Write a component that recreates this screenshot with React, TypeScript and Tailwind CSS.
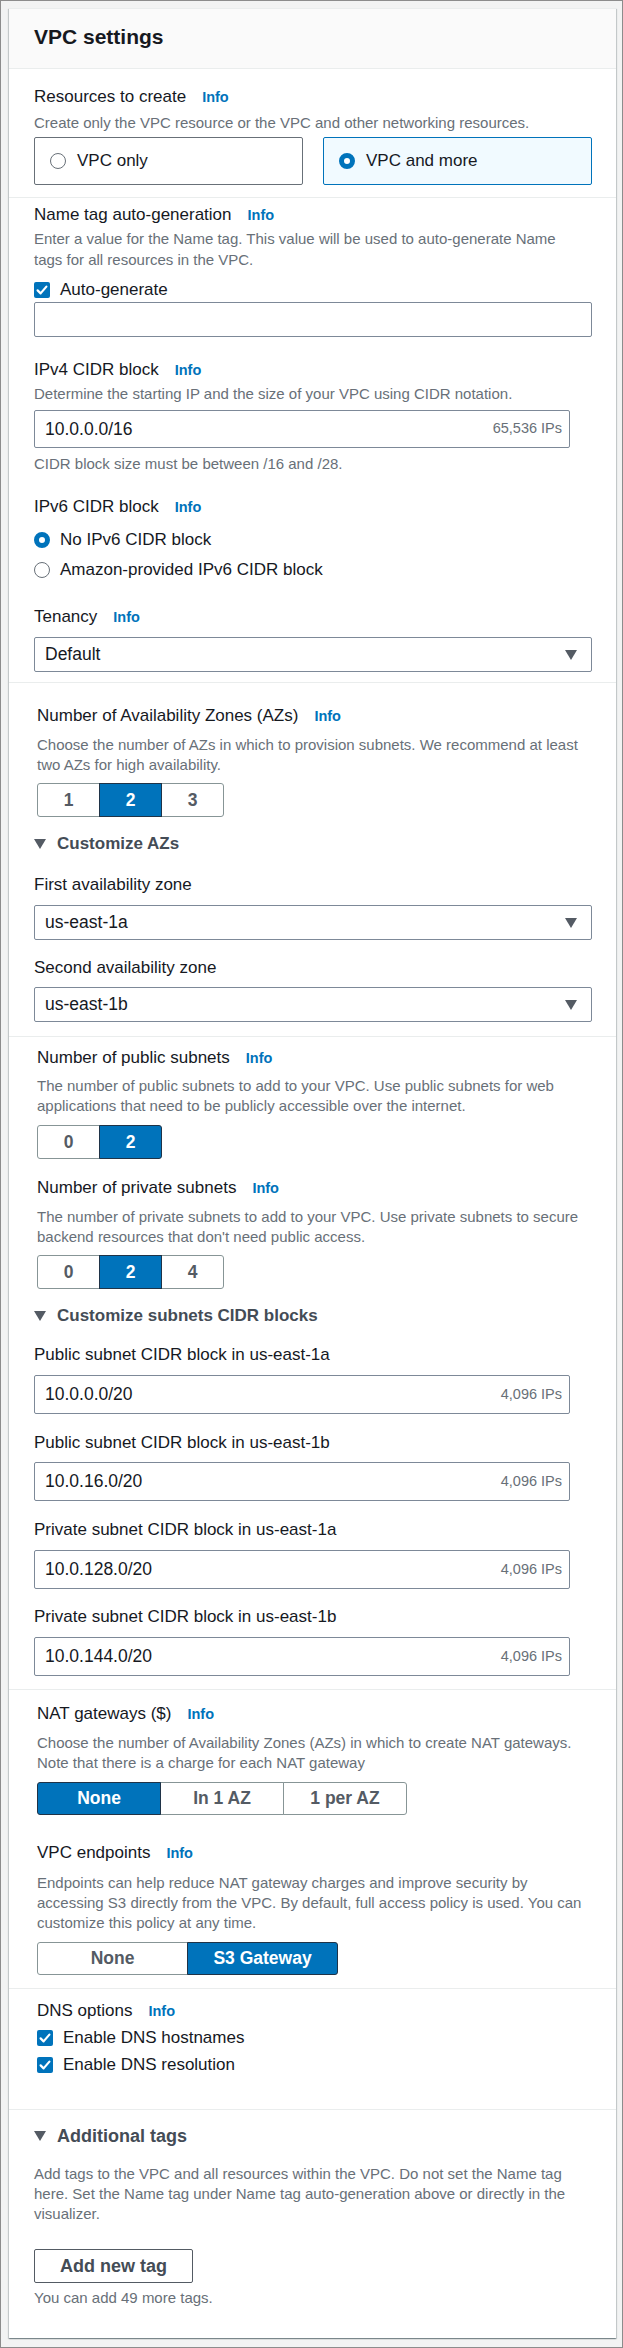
import React from "react";

const FONT = "font-['Liberation_Sans',Arial,sans-serif]";

function Info() {
  return <span className="ml-[16px] text-[14.5px] font-bold text-[#0073bb]">Info</span>;
}

function Label({ children, info, className = "" }: { children: React.ReactNode; info?: boolean; className?: string }) {
  return (
    <div className={`h-[22px] whitespace-nowrap text-[17px] leading-[22px] text-[#16191f] ${className}`}>
      {children}
      {info && <Info />}
    </div>
  );
}

function Desc({ lines, className = "" }: { lines: string[]; className?: string }) {
  return (
    <div className={`text-[15px] leading-[20px] text-[#687078] ${className}`}>
      {lines.map((l) => (
        <div key={l} className="whitespace-nowrap">
          {l}
        </div>
      ))}
    </div>
  );
}

function Caret({ className = "" }: { className?: string }) {
  return (
    <svg width="12" height="10" viewBox="0 0 12 10" className={className}>
      <path d="M0 0 H12 L6 10 Z" fill="#545b64" />
    </svg>
  );
}

function Expander({ children, className = "" }: { children: React.ReactNode; className?: string }) {
  return (
    <div className={`flex h-[22px] items-center gap-[11px] ${className}`}>
      <Caret />
      <span className="text-[17px] font-bold text-[#444c56]">{children}</span>
    </div>
  );
}

function Radio({ on }: { on?: boolean }) {
  return on ? (
    <span className="block h-[16px] w-[16px] shrink-0 rounded-full border-[5px] border-[#0073bb] bg-white" />
  ) : (
    <span className="block h-[16px] w-[16px] shrink-0 rounded-full border-[1.5px] border-[#687078] bg-white" />
  );
}

function Checkbox() {
  return (
    <svg width="16" height="16" viewBox="0 0 16 16" className="shrink-0">
      <rect width="16" height="16" rx="2" fill="#0073bb" />
      <path d="M3.6 8.4 L6.6 11.4 L12.4 4.6" stroke="#fff" strokeWidth="2.2" fill="none" strokeLinecap="round" strokeLinejoin="round" />
    </svg>
  );
}

function CheckRow({ children, className = "" }: { children: React.ReactNode; className?: string }) {
  return (
    <div className={`flex h-[22px] items-center gap-[10px] text-[17px] text-[#16191f] ${className}`}>
      <Checkbox />
      <span>{children}</span>
    </div>
  );
}

function RadioRow({ children, on, className = "" }: { children: React.ReactNode; on?: boolean; className?: string }) {
  return (
    <div className={`flex h-[22px] items-center gap-[10px] text-[17px] text-[#16191f] ${className}`}>
      <Radio on={on} />
      <span>{children}</span>
    </div>
  );
}

function Select({ value, className = "" }: { value: string; className?: string }) {
  return (
    <div className={`flex h-[35px] w-full items-center justify-between rounded-[2px] border border-[#7d8998] bg-white pl-[10px] pr-[14px] text-[17.5px] text-[#16191f] ${className}`}>
      <span>{value}</span>
      <Caret />
    </div>
  );
}

function CidrInput({ value, ips, className = "" }: { value: string; ips: string; className?: string }) {
  return (
    <div className={`flex w-[536px] items-center justify-between rounded-[2px] border border-[#7d8998] bg-white pl-[10px] pr-[7px] ${className}`}>
      <span className="text-[17.5px] text-[#16191f]">{value}</span>
      <span className="text-[14.5px] text-[#687078]">{ips}</span>
    </div>
  );
}

function Segmented({ options, selected, btn, className = "" }: { options: string[]; selected: string; btn: string; className?: string }) {
  return (
    <div className={`flex ${className}`}>
      {options.map((o, i) => {
        const on = o === selected;
        return (
          <div
            key={o}
            className={`flex items-center justify-center border text-[17.5px] font-bold ${btn} ${i > 0 ? "-ml-px" : ""} ${
              i === 0 ? "rounded-l-[3px]" : ""
            } ${i === options.length - 1 ? "rounded-r-[3px]" : ""} ${
              on ? "relative z-10 border-[#1f3347] bg-[#0073bb] text-white" : "border-[#879596] bg-white text-[#545b64]"
            }`}
          >
            {o}
          </div>
        );
      })}
    </div>
  );
}

export default function App() {
  return (
    <div className={`h-[2348px] w-[623px] border border-[#8c8c8c] bg-[#f2f3f3] pl-[8px] pr-[6px] pt-[7px] ${FONT}`}>
      <div className="border-t border-[#eaeded] bg-white shadow-[0_1px_1px_0_rgba(0,28,36,0.3),1px_1px_1px_0_rgba(0,28,36,0.15),-1px_1px_1px_0_rgba(0,28,36,0.15)]">
        {/* Header */}
        <div className="h-[60px] border-b border-[#eaeded] bg-[#fafafa] pl-[25px] pt-[15px]">
          <h2 className="text-[21px] font-bold leading-[26px] text-[#16191f]">VPC settings</h2>
        </div>

        {/* Resources to create */}
        <div className="pl-[25px] pr-[24px] pb-[12px] pt-[17px]">
          <Label info>Resources to create</Label>
          <Desc className="mt-[5px]" lines={["Create only the VPC resource or the VPC and other networking resources."]} />
          <div className="mt-[4px] grid grid-cols-2 gap-[20px]">
            <div className="flex h-[48px] items-center gap-[11px] rounded-[2px] border border-[#687078] pl-[15px] text-[17px] text-[#16191f]">
              <Radio />
              <span>VPC only</span>
            </div>
            <div className="flex h-[48px] items-center gap-[11px] rounded-[2px] border border-[#0073bb] bg-[#f1faff] pl-[15px] text-[17px] text-[#16191f]">
              <Radio on />
              <span>VPC and more</span>
            </div>
          </div>
        </div>

        {/* Name tag, CIDR, tenancy */}
        <div className="border-t border-[#eaeded] pl-[25px] pr-[24px] pb-[10px] pt-[6px]">
          <Label info>Name tag auto-generation</Label>
          <div className="mt-[2px] text-[15px] leading-[21px] text-[#687078]">
            <div className="whitespace-nowrap">Enter a value for the Name tag. This value will be used to auto-generate Name</div>
            <div className="whitespace-nowrap">tags for all resources in the VPC.</div>
          </div>
          <CheckRow className="mt-[9px]">Auto-generate</CheckRow>
          <div className="mt-[1px] h-[35px] w-full rounded-[2px] border border-[#7d8998] bg-white" />

          <Label info className="mt-[22px]">IPv4 CIDR block</Label>
          <Desc className="mt-[3px]" lines={["Determine the starting IP and the size of your VPC using CIDR notation."]} />
          <CidrInput className="mt-[6px] h-[38px]" value="10.0.0.0/16" ips="65,536 IPs" />
          <Desc className="mt-[6px]" lines={["CIDR block size must be between /16 and /28."]} />

          <Label info className="mt-[22px]">IPv6 CIDR block</Label>
          <RadioRow on className="mt-[11px]">No IPv6 CIDR block</RadioRow>
          <RadioRow className="mt-[8px]">Amazon-provided IPv6 CIDR block</RadioRow>

          <Label info className="mt-[25px]">Tenancy</Label>
          <Select className="mt-[9px]" value="Default" />
        </div>

        {/* Availability zones */}
        <div className="border-t border-[#eaeded] pl-[25px] pr-[24px] pb-[14px] pt-[22px]">
          <Label info className="ml-[3px]">Number of Availability Zones (AZs)</Label>
          <Desc
            className="ml-[3px] mt-[8px]"
            lines={["Choose the number of AZs in which to provision subnets. We recommend at least", "two AZs for high availability."]}
          />
          <Segmented className="ml-[3px] mt-[8px]" btn="h-[34px] w-[63px]" options={["1", "2", "3"]} selected="2" />
          <Expander className="mt-[16px]">Customize AZs</Expander>
          <Label className="mt-[19px]">First availability zone</Label>
          <Select className="mt-[9px]" value="us-east-1a" />
          <Label className="mt-[17px]">Second availability zone</Label>
          <Select className="mt-[8px]" value="us-east-1b" />
        </div>

        {/* Subnets */}
        <div className="border-t border-[#eaeded] pl-[25px] pr-[24px] pb-[13px] pt-[10px]">
          <Label info className="ml-[3px]">Number of public subnets</Label>
          <Desc
            className="ml-[3px] mt-[7px]"
            lines={["The number of public subnets to add to your VPC. Use public subnets for web", "applications that need to be publicly accessible over the internet."]}
          />
          <Segmented className="ml-[3px] mt-[9px]" btn="h-[34px] w-[63px]" options={["0", "2"]} selected="2" />

          <Label info className="ml-[3px] mt-[18px]">Number of private subnets</Label>
          <Desc
            className="ml-[3px] mt-[8px]"
            lines={["The number of private subnets to add to your VPC. Use private subnets to secure", "backend resources that don't need public access."]}
          />
          <Segmented className="ml-[3px] mt-[8px]" btn="h-[34px] w-[63px]" options={["0", "2", "4"]} selected="2" />

          <Expander className="mt-[16px]">Customize subnets CIDR blocks</Expander>
          <Label className="mt-[17px]">Public subnet CIDR block in us-east-1a</Label>
          <CidrInput className="mt-[9px] h-[39px]" value="10.0.0.0/20" ips="4,096 IPs" />
          <Label className="mt-[18px]">Public subnet CIDR block in us-east-1b</Label>
          <CidrInput className="mt-[8px] h-[39px]" value="10.0.16.0/20" ips="4,096 IPs" />
          <Label className="mt-[18px]">Private subnet CIDR block in us-east-1a</Label>
          <CidrInput className="mt-[9px] h-[39px]" value="10.0.128.0/20" ips="4,096 IPs" />
          <Label className="mt-[17px]">Private subnet CIDR block in us-east-1b</Label>
          <CidrInput className="mt-[9px] h-[39px]" value="10.0.144.0/20" ips="4,096 IPs" />
        </div>

        {/* NAT and endpoints */}
        <div className="border-t border-[#eaeded] pl-[25px] pr-[24px] pb-[13px] pt-[13px]">
          <Label info className="ml-[3px]">NAT gateways ($)</Label>
          <Desc
            className="ml-[3px] mt-[8px]"
            lines={["Choose the number of Availability Zones (AZs) in which to create NAT gateways.", "Note that there is a charge for each NAT gateway"]}
          />
          <Segmented className="ml-[3px] mt-[9px]" btn="h-[33px] w-[124px]" options={["None", "In 1 AZ", "1 per AZ"]} selected="None" />

          <Label info className="ml-[3px] mt-[27px]">VPC endpoints</Label>
          <Desc
            className="ml-[3px] mt-[9px]"
            lines={[
              "Endpoints can help reduce NAT gateway charges and improve security by",
              "accessing S3 directly from the VPC. By default, full access policy is used. You can",
              "customize this policy at any time.",
            ]}
          />
          <Segmented className="ml-[3px] mt-[9px]" btn="h-[33px] w-[151px]" options={["None", "S3 Gateway"]} selected="S3 Gateway" />
        </div>

        {/* DNS */}
        <div className="border-t border-[#eaeded] pl-[25px] pr-[24px] pb-[33px] pt-[11px]">
          <Label info className="ml-[3px]">DNS options</Label>
          <CheckRow className="ml-[3px] mt-[5px]">Enable DNS hostnames</CheckRow>
          <CheckRow className="ml-[3px] mt-[5px]">Enable DNS resolution</CheckRow>
        </div>

        {/* Tags */}
        <div className="border-t border-[#eaeded] pl-[25px] pr-[24px] pb-[30px] pt-[15px]">
          <div className="flex h-[22px] items-center gap-[11px]">
            <Caret />
            <span className="text-[18px] font-bold text-[#444c56]">Additional tags</span>
          </div>
          <Desc
            className="mt-[17px]"
            lines={[
              "Add tags to the VPC and all resources within the VPC. Do not set the Name tag",
              "here. Set the Name tag under Name tag auto-generation above or directly in the",
              "visualizer.",
            ]}
          />
          <div className="mt-[25px] flex h-[34px] w-[159px] items-center justify-center rounded-[2px] border border-[#545b64] bg-white text-[18px] font-bold text-[#444c56]">
            Add new tag
          </div>
          <Desc className="mt-[5px]" lines={["You can add 49 more tags."]} />
        </div>
      </div>
    </div>
  );
}
